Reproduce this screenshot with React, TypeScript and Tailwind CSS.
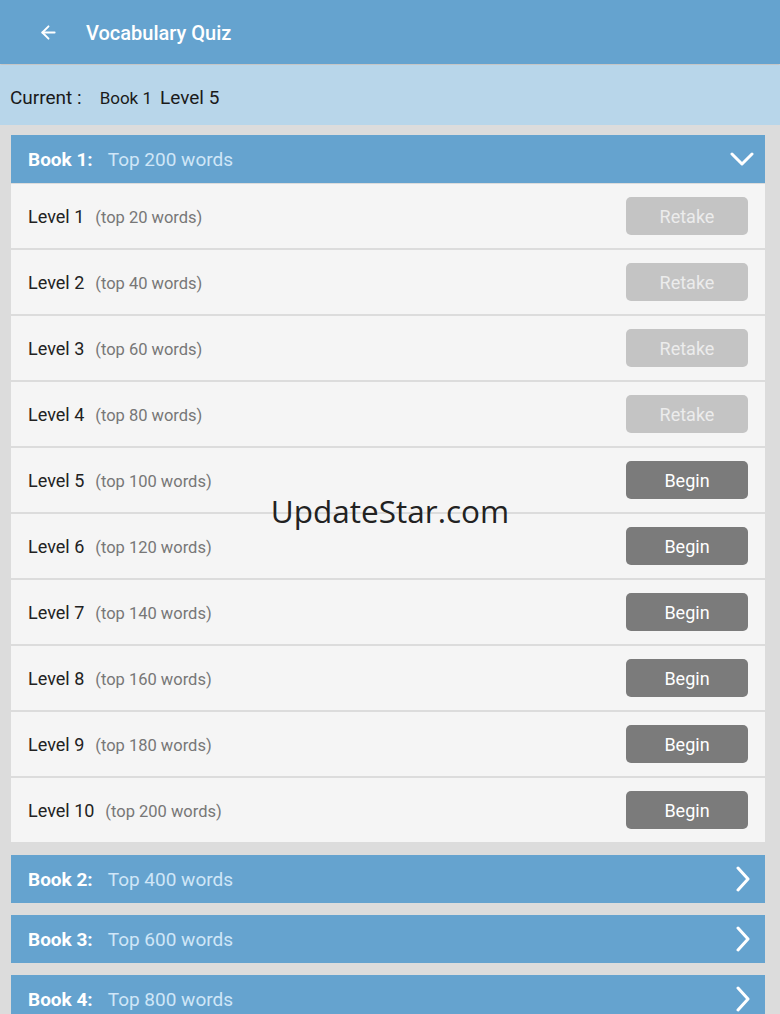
import { ArrowLeft } from 'lucide-react';

const levels = [
  { n: 1, words: 20, done: true },
  { n: 2, words: 40, done: true },
  { n: 3, words: 60, done: true },
  { n: 4, words: 80, done: true },
  { n: 5, words: 100, done: false },
  { n: 6, words: 120, done: false },
  { n: 7, words: 140, done: false },
  { n: 8, words: 160, done: false },
  { n: 9, words: 180, done: false },
  { n: 10, words: 200, done: false },
];

function ChevronDown() {
  return (
    <svg width="24" height="16" viewBox="0 0 24 16" fill="none">
      <path d="M2 3l10 10L22 3" stroke="white" strokeWidth="3" strokeLinecap="round" strokeLinejoin="round" />
    </svg>
  );
}

function ChevronRight() {
  return (
    <svg width="16" height="26" viewBox="0 0 16 26" fill="none">
      <path d="M3 2l10 11L3 24" stroke="white" strokeWidth="3" strokeLinecap="round" strokeLinejoin="round" />
    </svg>
  );
}

function BookHeader({ book, top, open }: { book: number; top: number; open?: boolean }) {
  return (
    <div className="h-12 bg-[#65a3cf] flex items-center pl-[17px] pr-[11px] text-[19px]">
      <div className="flex items-baseline pt-[3px]">
        <span className="font-bold text-white">Book {book}:</span>
        <span className="ml-[15px] text-[#cfe6f7]">Top {top} words</span>
      </div>
      <div className="ml-auto flex items-center">{open ? <ChevronDown /> : <span className="mr-[3px]"><ChevronRight /></span>}</div>
    </div>
  );
}

export default function App() {
  return (
    <div className="w-[780px] h-[1014px] overflow-hidden bg-[#dcdcdc]" style={{ fontFamily: 'Roboto, "Liberation Sans", sans-serif' }}>
      {/* toolbar */}
      <div className="h-16 bg-[#65a3cf] flex items-center shadow-[0_1px_2px_rgba(0,0,0,0.15)]">
        <ArrowLeft className="ml-[38px] text-white" size={21} strokeWidth={2.2} />
        <h1 className="ml-[27px] pt-[2px] text-white text-[20px] font-medium">Vocabulary Quiz</h1>
      </div>

      {/* current */}
      <div className="mt-px h-[60px] bg-[#b8d6ea] flex items-baseline pt-[19px] pl-[10px] text-[#1a1a1a]">
        <span className="text-[19px]">Current :</span>
        <span className="ml-[18px] text-[17px]">Book 1</span>
        <span className="ml-[8px] text-[19px]">Level 5</span>
      </div>

      <div className="pl-[11px] pr-[15px] pt-[10px] flex flex-col">
        <BookHeader book={1} top={200} open />
        <div className="flex flex-col gap-[2px] bg-[#dcdcdc] mt-px">
          {levels.map((l) => (
            <div key={l.n} className="h-16 bg-[#f5f5f5] flex items-center pl-[17px] pr-[17px]">
              <div className="flex items-baseline pt-[2px]">
                <span className="text-[18px] text-[#222]">Level {l.n}</span>
                <span className="ml-[11px] text-[16.5px] text-[#777]">(top {l.words} words)</span>
              </div>
              <button
                className={
                  l.done
                    ? 'ml-auto w-[122px] h-[38px] rounded-[5px] bg-[#c4c4c4] text-[#ececec] text-[18px]'
                    : 'ml-auto w-[122px] h-[38px] rounded-[5px] bg-[#7b7b7b] text-white text-[18px]'
                }
              >
                {l.done ? 'Retake' : 'Begin'}
              </button>
            </div>
          ))}
        </div>
        <div className="mt-[13px] flex flex-col gap-3">
          <BookHeader book={2} top={400} />
          <BookHeader book={3} top={600} />
          <BookHeader book={4} top={800} />
        </div>
      </div>

      {/* watermark */}
      <div className="absolute left-0 top-[487px] w-[780px] text-center text-[31.5px] text-[#222] pointer-events-none" style={{ fontFamily: '"Open Sans", sans-serif' }}>
        UpdateStar.com
      </div>
    </div>
  );
}
